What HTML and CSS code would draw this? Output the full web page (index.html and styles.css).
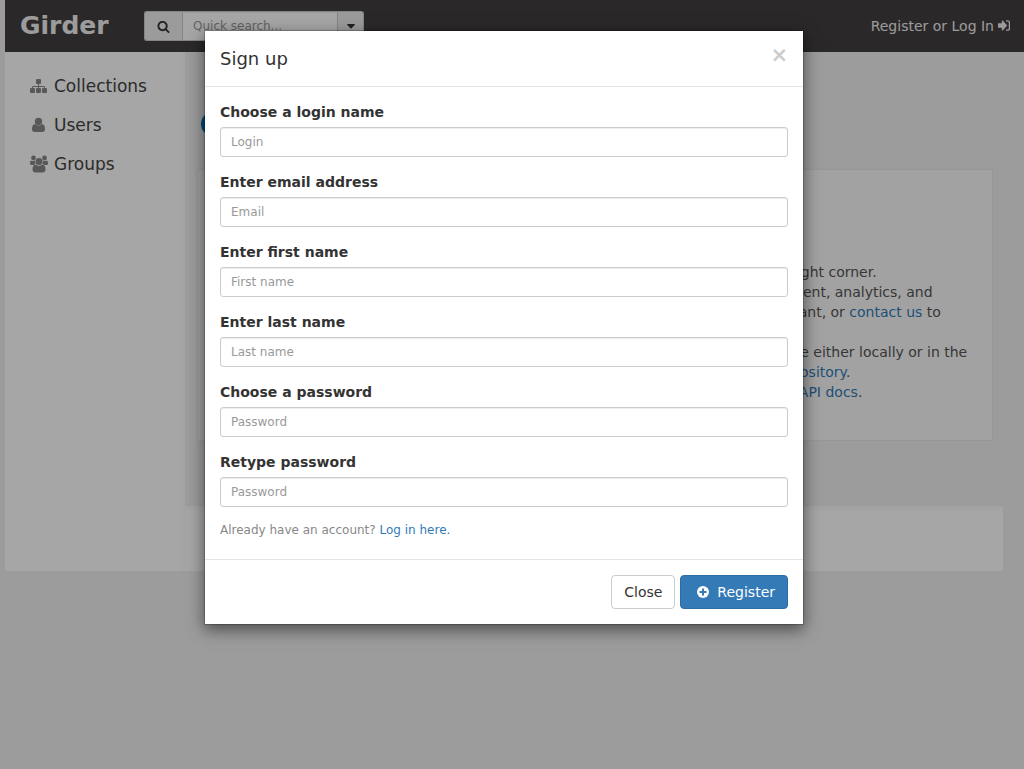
FILE: index.html
```html
<!DOCTYPE html>
<html lang="en">
<head>
<meta charset="utf-8">
<title>Girder</title>
<link rel="stylesheet" href="styles.css">
</head>
<body>
<header class="header">
  <a class="brand" href="#">Girder</a>
  <form class="search">
    <button class="search-button" type="button" aria-label="Search">
      <svg width="13" height="13" viewBox="0 0 1792 1792"><path fill="currentColor" d="M1216 832q0-185-131.500-316.500t-316.500-131.500-316.500 131.500-131.500 316.500 131.500 316.500 316.500 131.500 316.500-131.500 131.500-316.500zm512 832q0 52-38 90t-90 38q-54 0-90-38l-343-342q-179 124-399 124-143 0-273.500-55.500t-225-150-150-225-55.500-273.500 55.500-273.500 150-225 225-150 273.500-55.500 273.500 55.500 225 150 150 225 55.500 273.500q0 220-124 399l343 343q37 37 37 90z"/></svg>
    </button>
    <input class="search-input" type="text" placeholder="Quick search..." aria-label="Quick search">
    <button class="search-mode" type="button" aria-label="Search mode">
      <svg width="8" height="5" viewBox="0 0 8 5"><path fill="currentColor" d="M.5 0h7q.8.200.2 1L4.500 4.200q-.5.400-1 0L.3 1Q-.3.200.5 0z"/></svg>
    </button>
  </form>
  <nav class="account">
    <a href="#">Register</a> or <a href="#">Log In<svg class="login-icon" width="12" height="11" viewBox="0 0 12 11"><path fill="currentColor" d="M0 3.200h3.800V.8q.2-.7.900-.2L9.200 5.500 4.700 10.400q-.7.500-.9-.2V7.800H0z"/><path fill="none" stroke="currentColor" stroke-width="1.300" d="M8 .8h1.800q1.600 0 1.600 1.700v6q0 1.700-1.600 1.700H8"/></svg></a>
  </nav>
</header>
<div class="layout">
  <nav class="sidebar">
    <a class="nav-link" href="#">
      <svg width="18" height="16" viewBox="0 0 18 16"><g fill="currentColor"><rect x="6" y="1" width="5" height="5" rx="1"/><rect y="10" width="5" height="5" rx="1"/><rect x="6" y="10" width="5" height="5" rx="1"/><rect x="12" y="10" width="5" height="5" rx="1"/></g><path fill="none" stroke="currentColor" d="M8.500 5v6M2.500 11V9q0-.5.500-.5h11q.5 0 .5.500v2"/></svg>
      Collections
    </a>
    <a class="nav-link" href="#">
      <svg width="18" height="16" viewBox="0 0 18 16"><g fill="currentColor"><circle cx="8.500" cy="4.500" r="3.700"/><path d="M5 7Q2 7.500 2 12q0 3 2.500 3h8q2.500 0 2.500-3 0-4.500-3-5-3.500 3.200-7 0z"/></g></svg>
      Users
    </a>
    <a class="nav-link" href="#">
      <svg width="18" height="18" viewBox="0 0 18 18"><g fill="currentColor"><circle cx="3.500" cy="3" r="2.400"/><circle cx="14.500" cy="3" r="2.400"/><path d="M1 5.500Q0 6 0 8.500 0 10 1.500 10H4Q5 9 5.500 8.700 4.600 7 5 5.500 3 6.500 1 5.500zM17 5.500q1 .5 1 3 0 1.500-1.500 1.500H14q-1-1-1.500-1.300.9-1.700.5-3.200 2 1 4 0z"/><circle cx="9" cy="6.500" r="3.500"/><path d="M5.500 9.500Q2.500 10 2.500 14q0 3.500 3 3.500h7q3 0 3-3.500 0-4-3-4.500-3.500 2.500-7 0z"/></g></svg>
      Groups
    </a>
  </nav>
  <main class="main">
    <div class="hero">
      <svg width="24" height="24" viewBox="0 0 24 24"><circle cx="12" cy="12" r="12" fill="#0070b8"/></svg>
    </div>
    <section class="panel">
      <h2>Welcome to Girder!</h2>
      <p>Log in or register for a new general account using the links provided in the upper right corner.<br>
      Girder is part of Resonant, the Kitware open source platform for our data management, analytics, and<br>
      visualization. To learn more about the new project and related services, visit Resonant, or <a href="#">contact us</a> to<br>
      find out how we can help.</p>
      <p>Please read the user guide and the current installation notes to set up your instance either locally or in the<br>
      cloud. The Girder source code of the project is available from the public <a href="#">GitHub repository</a>.<br>
      Developers can explore the complete set of endpoints in the main interactive <a href="#">web API docs</a>.</p>
    </section>
  </main>
  <footer class="footer"></footer>
</div>
<div class="backdrop">
  <div class="modal" role="dialog" aria-modal="true" aria-labelledby="modal-title">
    <div class="modal-header">
      <h4 id="modal-title">Sign up</h4>
      <button class="dismiss" type="button" aria-label="Dismiss">×</button>
    </div>
    <form id="register" class="modal-body">
      <div class="field"><label for="login">Choose a login name</label><input id="login" type="text" placeholder="Login"></div>
      <div class="field"><label for="email">Enter email address</label><input id="email" type="text" placeholder="Email"></div>
      <div class="field"><label for="first">Enter first name</label><input id="first" type="text" placeholder="First name"></div>
      <div class="field"><label for="last">Enter last name</label><input id="last" type="text" placeholder="Last name"></div>
      <div class="field"><label for="password">Choose a password</label><input id="password" type="password" placeholder="Password"></div>
      <div class="field"><label for="retype">Retype password</label><input id="retype" type="password" placeholder="Password"></div>
      <div class="hint">Already have an account? <a href="#">Log in here.</a></div>
    </form>
    <div class="modal-footer">
      <button class="button" type="button">Close</button>
      <button class="button primary" type="submit" form="register"><svg width="12" height="12" viewBox="0 0 12 12"><circle cx="6" cy="6" r="6" fill="currentColor"/><path d="M6 2.500v7M2.500 6h7" stroke="#337ab7" stroke-width="2"/></svg>Register</button>
    </div>
  </div>
</div>
</body>
</html>
```
FILE: styles.css
```css
* { box-sizing: border-box; }
body {
  margin: 0;
  padding-left: 5px;
  min-height: 100vh;
  background: #f0f0f0;
  color: #333;
  font: 14px/20px "DejaVu Sans", sans-serif;
}
a { color: #337ab7; text-decoration: none; }
button, input { font-family: inherit; }
svg { flex: none; }

.header {
  display: flex;
  align-items: center;
  height: 52px;
  padding: 0 14px 0 15px;
  background: #413e3f;
  color: #eee;
}
.brand { width: 124px; color: #f0f0f0; font-size: 25px; font-weight: bold; }
.search { display: flex; width: 220px; height: 30px; }
.search button {
  display: flex;
  align-items: center;
  justify-content: center;
  padding: 0;
  border: 1px solid #ccc;
  background: #eee;
  color: #333;
}
.search .search-button { width: 38px; border-right: 0; border-radius: 3px 0 0 3px; }
.search .search-mode { width: 26px; border-left: 0; border-radius: 0 3px 3px 0; }
.search-input {
  flex: 1;
  min-width: 0;
  padding: 5px 10px;
  border: 1px solid #ccc;
  background: #fff;
  font-size: 12px;
  box-shadow: inset 0 1px 1px rgba(0, 0, 0, .075);
}
.account { margin-left: auto; }
.account a { color: inherit; }
.login-icon { margin-left: 4px; }

.layout {
  display: grid;
  grid-template-columns: 180px 1fr;
  grid-template-rows: auto 65px;
  margin-right: 21px;
}
.sidebar {
  grid-row: span 2;
  padding: 14px 25px;
  background: #fff linear-gradient(to left, #fcfcfc, #fff) right / 6px 100% no-repeat;
}
.nav-link {
  display: flex;
  align-items: center;
  gap: 6px;
  height: 39px;
  color: #444;
  font-size: 17px;
}
.nav-link svg { color: #888; }
.main { padding: 60px 10px 65px 12px; }
.hero { height: 57px; padding-left: 4px; }
.panel {
  height: 272px;
  padding: 19px;
  border: 1px solid #e8e8e8;
  background: #f9f9f9;
  color: #555;
  white-space: nowrap;
}
.panel h2 { margin: 24px 0 29px; font-size: 24px; line-height: 20px; }
.panel p { margin: 0; }
.footer { background: linear-gradient(#fafafa, #fff 6px); }

.backdrop {
  position: absolute;
  inset: 0;
  min-height: 100%;
  padding: 30px 16px 30px 0;
  background: rgba(0, 0, 0, .35);
}
.modal {
  max-width: 600px;
  margin: 0 auto;
  border: 1px solid rgba(0, 0, 0, .2);
  background: #fff;
  background-clip: padding-box;
  box-shadow: 0 5px 15px rgba(0, 0, 0, .5);
}
.modal-header {
  display: flex;
  justify-content: space-between;
  align-items: center;
  padding: 15px;
  border-bottom: 1px solid #e5e5e5;
}
.modal-header h4 { margin: 0; font-size: 18px; font-weight: normal; line-height: 25px; }
.dismiss {
  padding: 0 0 6px;
  border: 0;
  background: none;
  color: #ccc;
  font-size: 21px;
  font-weight: bold;
  line-height: 19px;
}
.modal-body { padding: 15px; }
.field { margin-bottom: 15px; }
.field label { display: block; margin-bottom: 5px; font-weight: bold; }
.field input {
  display: block;
  width: 100%;
  height: 30px;
  padding: 5px 10px;
  border: 1px solid #ccc;
  border-radius: 3px;
  font-size: 12px;
  box-shadow: inset 0 1px 1px rgba(0, 0, 0, .075);
}
input::placeholder { color: #999; }
.hint { padding-bottom: 6px; color: #888; font-size: 12px; line-height: 16px; }
.modal-footer {
  display: flex;
  justify-content: flex-end;
  gap: 5px;
  padding: 15px;
  border-top: 1px solid #e5e5e5;
}
.button {
  display: flex;
  align-items: center;
  height: 34px;
  padding: 0 12px;
  border: 1px solid #ccc;
  border-radius: 4px;
  background: #fff;
  color: #333;
  font-size: 14px;
}
.button.primary { gap: 8px; padding-left: 16px; border-color: #2e6da4; background: #337ab7; color: #fff; }
```
